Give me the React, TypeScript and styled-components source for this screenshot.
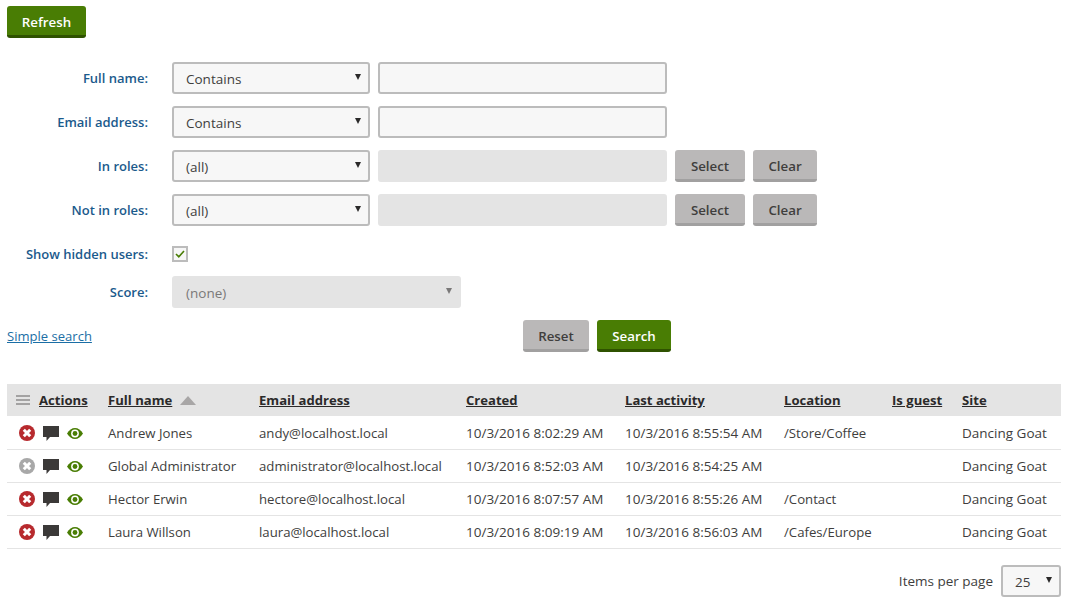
import React from "react";
import styled, { createGlobalStyle } from "styled-components";

const GlobalStyle = createGlobalStyle`
    html, body {
        margin: 0;
        padding: 0;
        background: #fff;
    }
    body {
        font-family: "Open Sans", "Noto Sans", sans-serif;
        font-size: 13.5px;
        color: #403e3d;
    }
`;

const Page = styled.div`
    width: 1054px;
    padding: 6px 6px 0 7px;
`;

const Button = styled.button<{ $primary?: boolean; $width: number }>`
    width: ${(p) => p.$width}px;
    height: 32px;
    padding: 3px 0 0;
    border: 0;
    border-bottom: 3px solid ${(p) => (p.$primary ? "#2f5200" : "#a1a0a0")};
    border-radius: 3px;
    background: ${(p) => (p.$primary ? "#497d04" : "#bab8b8")};
    color: ${(p) => (p.$primary ? "#fff" : "#403e3d")};
    font-family: inherit;
    font-size: 13.3px;
    font-weight: 600;
    flex: none;
`;

const Form = styled.div`
    display: flex;
    flex-direction: column;
    margin-top: 24px;
`;

const Row = styled.div<{ $top: number }>`
    display: flex;
    align-items: center;
    height: 32px;
    margin-top: ${(p) => p.$top}px;
    gap: 8px;
`;

const Label = styled.label`
    width: 141px;
    margin-right: 16px;
    text-align: right;
    font-size: 13px;
    font-weight: 600;
    color: #1b5a8c;
    flex: none;
`;

const SelectBox = styled.div<{ $width: number; $disabled?: boolean }>`
    box-sizing: border-box;
    width: ${(p) => p.$width}px;
    height: 32px;
    display: flex;
    align-items: center;
    justify-content: space-between;
    padding: 1px 7px 0 12px;
    border: 2px solid ${(p) => (p.$disabled ? "#e4e4e4" : "#bcbcbc")};
    border-radius: 3px;
    background: ${(p) => (p.$disabled ? "#e4e4e4" : "#f7f7f7")};
    color: ${(p) => (p.$disabled ? "#7a7878" : "#403e3d")};
    flex: none;
`;

const Caret = styled.span<{ $disabled?: boolean }>`
    width: 0;
    height: 0;
    margin-bottom: 4px;
    border-left: 3px solid transparent;
    border-right: 3px solid transparent;
    border-top: 6px solid ${(p) => (p.$disabled ? "#7a7878" : "#2b2a2a")};
`;

const TextInput = styled.input<{ $disabled?: boolean }>`
    box-sizing: border-box;
    width: 289px;
    height: 32px;
    padding: 0 10px;
    border: 2px solid ${(p) => (p.$disabled ? "#e4e4e4" : "#bcbcbc")};
    border-radius: 3px;
    background: ${(p) => (p.$disabled ? "#e4e4e4" : "#f7f7f7")};
    flex: none;
`;

const CheckBox = styled.span`
    box-sizing: border-box;
    width: 16px;
    height: 16px;
    border: 2px solid #bcbcbc;
    background: #f7f7f7;
    display: flex;
    align-items: center;
    justify-content: center;
`;

const FormFooter = styled.div`
    display: flex;
    align-items: center;
    height: 32px;
    margin-top: 12px;
`;

const SimpleSearch = styled.a`
    width: 516px;
    font-size: 13.05px;
    color: #1b6ea5;
    text-decoration: underline;
`;

const FooterButtons = styled.div`
    display: flex;
    gap: 8px;
`;

const TABLE_COLUMNS = "101px 151px 207px 159px 159px 108px 70px 99px";

const Table = styled.div`
    margin-top: 32px;
`;

const HeaderRow = styled.div`
    display: grid;
    grid-template-columns: ${TABLE_COLUMNS};
    align-items: center;
    height: 32px;
    background: #e4e4e4;
`;

const HeaderCell = styled.span`
    display: flex;
    align-items: center;
    font-size: 13.1px;
    font-weight: 700;
    color: #2b2a2a;
    text-decoration: underline;
`;

const ActionsHeader = styled(HeaderCell)`
    gap: 9px;
    padding-left: 9px;
`;

const TableBody = styled.div`
    padding-top: 1px;
`;

const BodyRow = styled.div`
    display: grid;
    grid-template-columns: ${TABLE_COLUMNS};
    align-items: center;
    box-sizing: border-box;
    height: 33px;
    border-bottom: 1px solid #e4e4e4;
`;

const Cell = styled.span`
    white-space: nowrap;
`;

const TextCell = styled(Cell)`
    font-size: 13.2px;
`;

const ActionIcons = styled.span`
    display: flex;
    align-items: center;
    gap: 8px;
    padding-left: 12px;
`;

const Pager = styled.div`
    display: flex;
    align-items: center;
    justify-content: flex-end;
    gap: 8px;
    margin-top: 16px;
`;

const Icon = styled.svg`
    display: block;
    flex: none;
`;

const SortIcon = styled(Icon)`
    margin-left: 8px;
`;

const MenuIcon = () => (
    <Icon width="14" height="10" viewBox="0 0 14 10">
        <path d="M0 1h14M0 5h14M0 9h14" stroke="#a3a2a2" strokeWidth="2" />
    </Icon>
);

const SortArrow = () => (
    <SortIcon width="16" height="9" viewBox="0 0 16 9">
        <path d="M8 0l8 9H0z" fill="#a8a6a6" />
    </SortIcon>
);

const DeleteIcon = ({ muted }: { muted?: boolean }) => (
    <Icon width="16" height="16" viewBox="0 0 16 16">
        <circle cx="8" cy="8" r="8" fill={muted ? "#a8a8a8" : "#b72a2e"} />
        <path d="M4.8 4.8l6.4 6.4M11.2 4.8l-6.4 6.4" stroke="#fff" strokeWidth="3" />
    </Icon>
);

const CommentIcon = () => (
    <Icon width="16" height="15" viewBox="0 0 16 15">
        <path d="M0 0h16v11H7l-3.5 4v-4H0z" fill="#3b3938" />
    </Icon>
);

const EyeIcon = () => (
    <Icon width="16" height="11" viewBox="0 0 16 11">
        <path d="M0 5.5C2 2 5 0 8 0s6 2 8 5.5C14 9 11 11 8 11S2 9 0 5.5z" fill="#497d04" />
        <circle cx="8" cy="5.5" r="3.9" fill="#fff" />
        <circle cx="8" cy="5.5" r="2.4" fill="#497d04" />
    </Icon>
);

const CheckIcon = () => (
    <Icon width="10" height="8" viewBox="0 0 10 8">
        <path d="M1 4l2.8 2.8L9 1" fill="none" stroke="#497d04" strokeWidth="1.6" />
    </Icon>
);

interface IUser {
    name: string;
    email: string;
    created: string;
    activity: string;
    location: string;
    muted?: boolean;
}

const users: Array<IUser> = [
    { name: "Andrew Jones", email: "andy@localhost.local", created: "10/3/2016 8:02:29 AM", activity: "10/3/2016 8:55:54 AM", location: "/Store/Coffee" },
    { name: "Global Administrator", email: "administrator@localhost.local", created: "10/3/2016 8:52:03 AM", activity: "10/3/2016 8:54:25 AM", location: "", muted: true },
    { name: "Hector Erwin", email: "hectore@localhost.local", created: "10/3/2016 8:07:57 AM", activity: "10/3/2016 8:55:26 AM", location: "/Contact" },
    { name: "Laura Willson", email: "laura@localhost.local", created: "10/3/2016 8:09:19 AM", activity: "10/3/2016 8:56:03 AM", location: "/Cafes/Europe" },
];

const Select: React.FunctionComponent<{ value: string; width?: number; disabled?: boolean }> = ({ value, width = 198, disabled }) => (
    <SelectBox $width={width} $disabled={disabled}>
        <span>{value}</span>
        <Caret $disabled={disabled} />
    </SelectBox>
);

const App: React.FunctionComponent = () => {
    return (
        <Page>
            <GlobalStyle />
            <Button $primary $width={79}>Refresh</Button>
            <Form>
                <Row $top={0}>
                    <Label>Full name:</Label>
                    <Select value="Contains" />
                    <TextInput />
                </Row>
                <Row $top={12}>
                    <Label>Email address:</Label>
                    <Select value="Contains" />
                    <TextInput />
                </Row>
                <Row $top={12}>
                    <Label>In roles:</Label>
                    <Select value="(all)" />
                    <TextInput $disabled disabled />
                    <Button $width={70}>Select</Button>
                    <Button $width={64}>Clear</Button>
                </Row>
                <Row $top={12}>
                    <Label>Not in roles:</Label>
                    <Select value="(all)" />
                    <TextInput $disabled disabled />
                    <Button $width={70}>Select</Button>
                    <Button $width={64}>Clear</Button>
                </Row>
                <Row $top={12}>
                    <Label>Show hidden users:</Label>
                    <CheckBox><CheckIcon /></CheckBox>
                </Row>
                <Row $top={6}>
                    <Label>Score:</Label>
                    <Select value="(none)" width={289} disabled />
                </Row>
                <FormFooter>
                    <SimpleSearch href="#">Simple search</SimpleSearch>
                    <FooterButtons>
                        <Button $width={66}>Reset</Button>
                        <Button $primary $width={74}>Search</Button>
                    </FooterButtons>
                </FormFooter>
            </Form>
            <Table>
                <HeaderRow>
                    <ActionsHeader><MenuIcon />Actions</ActionsHeader>
                    <HeaderCell>Full name<SortArrow /></HeaderCell>
                    <HeaderCell>Email address</HeaderCell>
                    <HeaderCell>Created</HeaderCell>
                    <HeaderCell>Last activity</HeaderCell>
                    <HeaderCell>Location</HeaderCell>
                    <HeaderCell>Is guest</HeaderCell>
                    <HeaderCell>Site</HeaderCell>
                </HeaderRow>
                <TableBody>
                    {users.map((user) => (
                        <BodyRow key={user.email}>
                            <ActionIcons>
                                <DeleteIcon muted={user.muted} />
                                <CommentIcon />
                                <EyeIcon />
                            </ActionIcons>
                            <TextCell>{user.name}</TextCell>
                            <TextCell>{user.email}</TextCell>
                            <Cell>{user.created}</Cell>
                            <Cell>{user.activity}</Cell>
                            <TextCell>{user.location}</TextCell>
                            <Cell />
                            <Cell>Dancing Goat</Cell>
                        </BodyRow>
                    ))}
                </TableBody>
            </Table>
            <Pager>
                <span>Items per page</span>
                <Select value="25" width={60} />
            </Pager>
        </Page>
    );
};

export default App;
